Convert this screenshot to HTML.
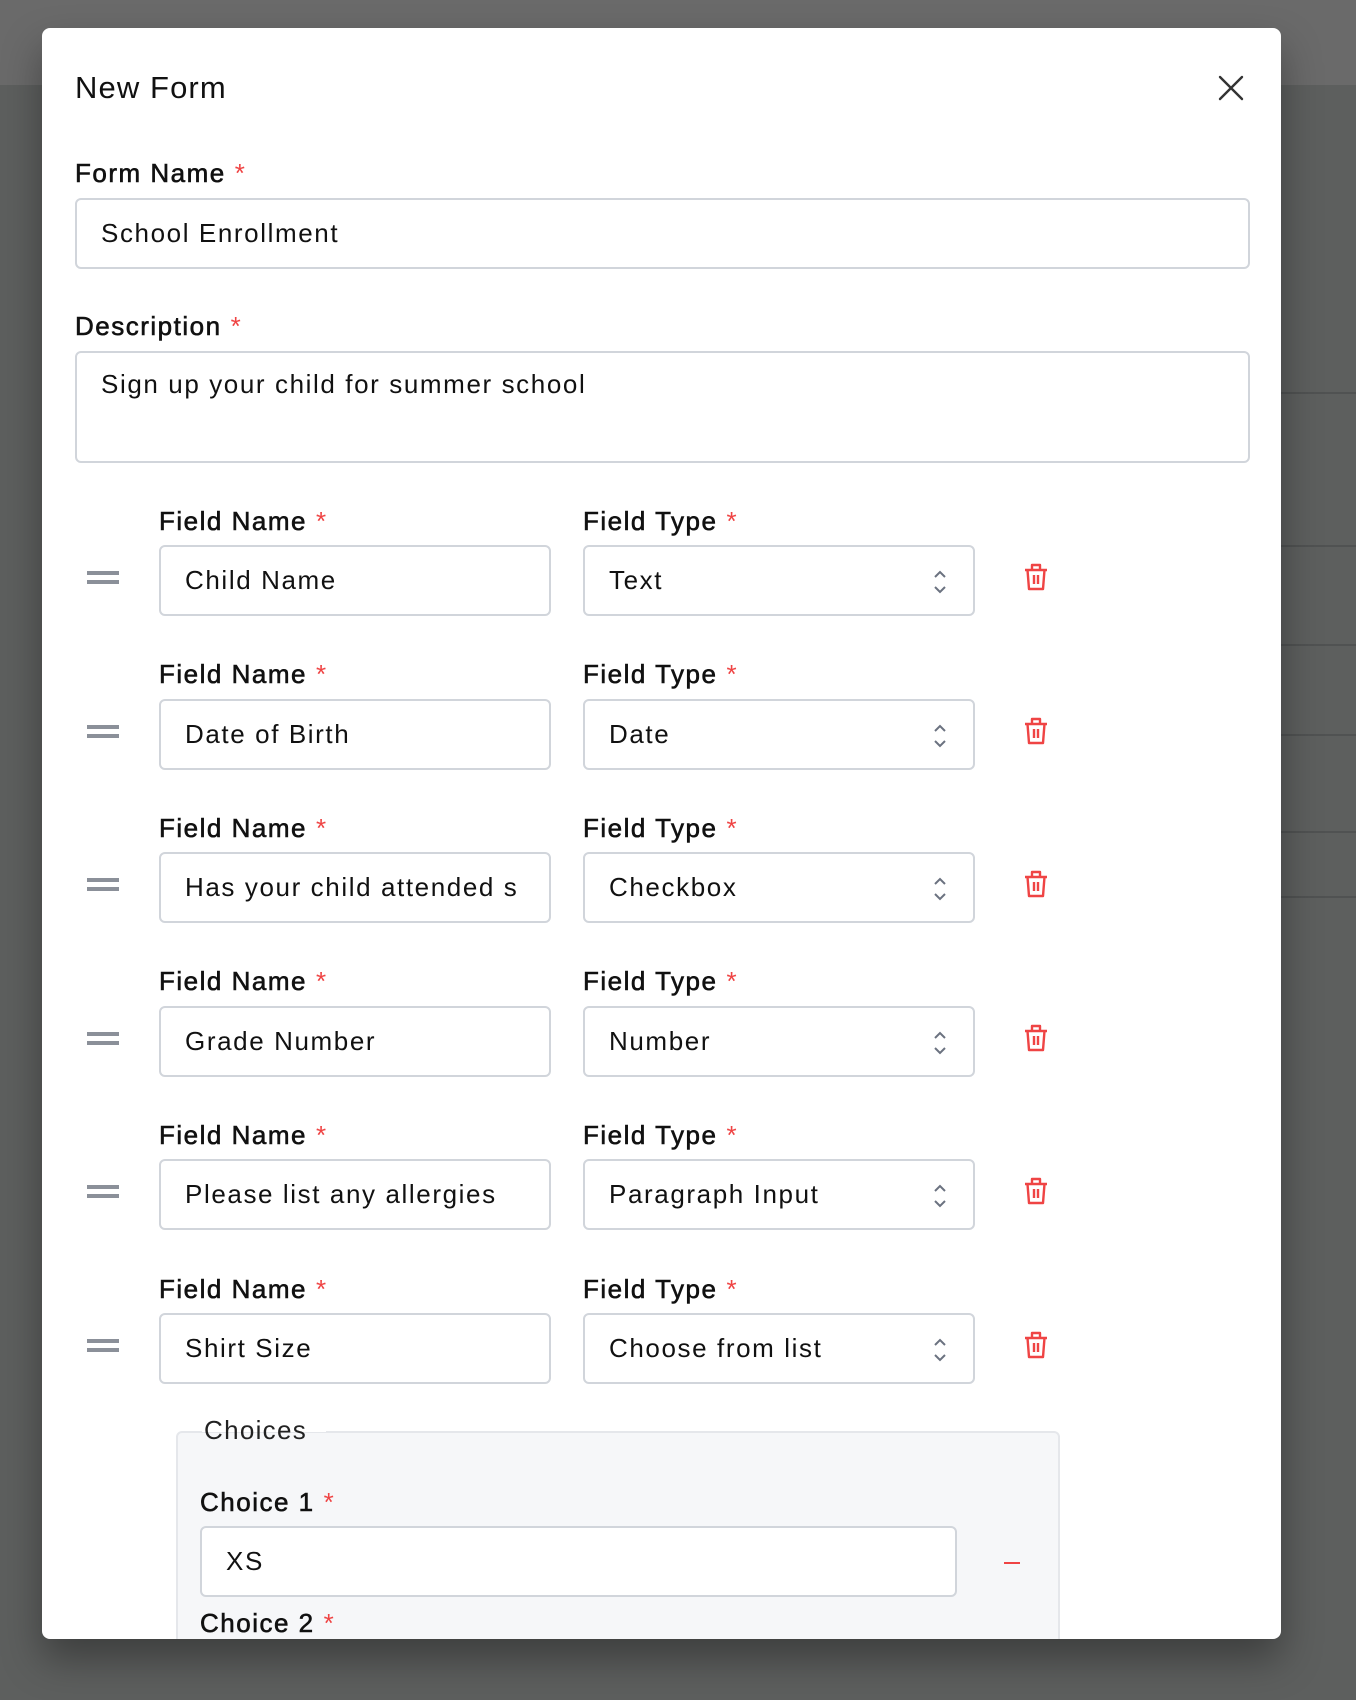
<!DOCTYPE html>
<html><head><meta charset="utf-8"><style>
*{box-sizing:border-box;margin:0;padding:0}
body{width:1356px;height:1700px;background:#5d5f5e;position:relative;overflow:hidden;font-family:"Liberation Sans",sans-serif;color:#111}
.topband{position:absolute;left:0;top:0;width:1356px;height:85px;background:#6a6a6a}
.bgline{position:absolute;right:0;width:80px;height:2px;background:#505252}
.modal{position:absolute;left:42px;top:28px;width:1239px;height:1611px;background:#fff;border-radius:8px;overflow:hidden;box-shadow:0 20px 40px rgba(0,0,0,.35)}
.abs{position:absolute}
.title{left:33px;top:42px;font-size:31px;letter-spacing:1.1px;color:#111}
.lbl{position:absolute;font-size:26px;font-weight:400;-webkit-text-stroke:0.6px #111;letter-spacing:1.5px;color:#111;line-height:30px}
.lbl b{color:#ef4444;font-weight:400;-webkit-text-stroke:0;margin-left:9px}
.inp{position:absolute;border:2px solid #d1d5db;border-radius:6px;background:#fff;font-size:26px;letter-spacing:1.6px;padding-left:24px;line-height:66px;white-space:nowrap;overflow:hidden}
.sel{padding-left:24px}
.chev{position:absolute;right:26px;top:22px}
.drag{position:absolute;left:45px;width:32px;height:14px}
.drag:before,.drag:after{content:"";position:absolute;left:0;width:32px;height:4px;background:#8b9099}
.drag:before{top:0}.drag:after{top:9px}
.trash{position:absolute;left:980px}
</style></head><body>
<div class="topband"></div>
<div class="bgline" style="top:392px"></div>
<div class="bgline" style="top:545px"></div>
<div class="bgline" style="top:644px"></div>
<div class="bgline" style="top:734px"></div>
<div class="bgline" style="top:831px"></div>
<div class="bgline" style="top:896px"></div>
<div class="modal">
<div class="abs title">New Form</div>
<svg class="abs" style="left:1175px;top:46px" width="28" height="28" viewBox="0 0 28 28"><path d="M3 3L25 25M25 3L3 25" stroke="#333" stroke-width="2.4" stroke-linecap="round"/></svg>

<div class="lbl" style="left:33px;top:130px">Form Name<b>*</b></div>
<div class="inp" style="left:33px;top:170px;width:1175px;height:71px">School Enrollment</div>

<div class="lbl" style="left:33px;top:283px">Description<b>*</b></div>
<div class="inp" style="left:33px;top:323px;width:1175px;height:112px;line-height:62px">Sign up your child for summer school</div>

<div class="lbl" style="left:117px;top:478px">Field Name<b>*</b></div>
<div class="lbl" style="left:541px;top:478px">Field Type<b>*</b></div>
<div class="drag" style="top:543px"></div>
<div class="inp" style="left:117px;top:517px;width:392px;height:71px">Child Name</div>
<div class="inp sel" style="left:541px;top:517px;width:392px;height:71px">Text<svg class="chev" width="14" height="26" viewBox="0 0 14 26"><path d="M2 8L7 3L12 8M2 18L7 23L12 18" fill="none" stroke="#6b7280" stroke-width="2"/></svg></div>
<svg class="trash" style="top:534px" width="28" height="30" viewBox="0 0 28 30"><path d="M3 8H25M10 8V3H18V8M5.5 8L7 27H21L22.5 8M12 13V22M16 13V22" fill="none" stroke="#ef4444" stroke-width="2.4" stroke-linejoin="round"/></svg>

<div class="lbl" style="left:117px;top:631px">Field Name<b>*</b></div>
<div class="lbl" style="left:541px;top:631px">Field Type<b>*</b></div>
<div class="drag" style="top:697px"></div>
<div class="inp" style="left:117px;top:671px;width:392px;height:71px">Date of Birth</div>
<div class="inp sel" style="left:541px;top:671px;width:392px;height:71px">Date<svg class="chev" width="14" height="26" viewBox="0 0 14 26"><path d="M2 8L7 3L12 8M2 18L7 23L12 18" fill="none" stroke="#6b7280" stroke-width="2"/></svg></div>
<svg class="trash" style="top:688px" width="28" height="30" viewBox="0 0 28 30"><path d="M3 8H25M10 8V3H18V8M5.5 8L7 27H21L22.5 8M12 13V22M16 13V22" fill="none" stroke="#ef4444" stroke-width="2.4" stroke-linejoin="round"/></svg>

<div class="lbl" style="left:117px;top:785px">Field Name<b>*</b></div>
<div class="lbl" style="left:541px;top:785px">Field Type<b>*</b></div>
<div class="drag" style="top:850px"></div>
<div class="inp" style="left:117px;top:824px;width:392px;height:71px">Has your child attended s</div>
<div class="inp sel" style="left:541px;top:824px;width:392px;height:71px">Checkbox<svg class="chev" width="14" height="26" viewBox="0 0 14 26"><path d="M2 8L7 3L12 8M2 18L7 23L12 18" fill="none" stroke="#6b7280" stroke-width="2"/></svg></div>
<svg class="trash" style="top:841px" width="28" height="30" viewBox="0 0 28 30"><path d="M3 8H25M10 8V3H18V8M5.5 8L7 27H21L22.5 8M12 13V22M16 13V22" fill="none" stroke="#ef4444" stroke-width="2.4" stroke-linejoin="round"/></svg>

<div class="lbl" style="left:117px;top:938px">Field Name<b>*</b></div>
<div class="lbl" style="left:541px;top:938px">Field Type<b>*</b></div>
<div class="drag" style="top:1004px"></div>
<div class="inp" style="left:117px;top:978px;width:392px;height:71px">Grade Number</div>
<div class="inp sel" style="left:541px;top:978px;width:392px;height:71px">Number<svg class="chev" width="14" height="26" viewBox="0 0 14 26"><path d="M2 8L7 3L12 8M2 18L7 23L12 18" fill="none" stroke="#6b7280" stroke-width="2"/></svg></div>
<svg class="trash" style="top:995px" width="28" height="30" viewBox="0 0 28 30"><path d="M3 8H25M10 8V3H18V8M5.5 8L7 27H21L22.5 8M12 13V22M16 13V22" fill="none" stroke="#ef4444" stroke-width="2.4" stroke-linejoin="round"/></svg>

<div class="lbl" style="left:117px;top:1092px">Field Name<b>*</b></div>
<div class="lbl" style="left:541px;top:1092px">Field Type<b>*</b></div>
<div class="drag" style="top:1157px"></div>
<div class="inp" style="left:117px;top:1131px;width:392px;height:71px">Please list any allergies</div>
<div class="inp sel" style="left:541px;top:1131px;width:392px;height:71px">Paragraph Input<svg class="chev" width="14" height="26" viewBox="0 0 14 26"><path d="M2 8L7 3L12 8M2 18L7 23L12 18" fill="none" stroke="#6b7280" stroke-width="2"/></svg></div>
<svg class="trash" style="top:1148px" width="28" height="30" viewBox="0 0 28 30"><path d="M3 8H25M10 8V3H18V8M5.5 8L7 27H21L22.5 8M12 13V22M16 13V22" fill="none" stroke="#ef4444" stroke-width="2.4" stroke-linejoin="round"/></svg>

<div class="lbl" style="left:117px;top:1246px">Field Name<b>*</b></div>
<div class="lbl" style="left:541px;top:1246px">Field Type<b>*</b></div>
<div class="drag" style="top:1311px"></div>
<div class="inp" style="left:117px;top:1285px;width:392px;height:71px">Shirt Size</div>
<div class="inp sel" style="left:541px;top:1285px;width:392px;height:71px">Choose from list<svg class="chev" width="14" height="26" viewBox="0 0 14 26"><path d="M2 8L7 3L12 8M2 18L7 23L12 18" fill="none" stroke="#6b7280" stroke-width="2"/></svg></div>
<svg class="trash" style="top:1302px" width="28" height="30" viewBox="0 0 28 30"><path d="M3 8H25M10 8V3H18V8M5.5 8L7 27H21L22.5 8M12 13V22M16 13V22" fill="none" stroke="#ef4444" stroke-width="2.4" stroke-linejoin="round"/></svg>

<div class="abs" style="left:134px;top:1403px;width:884px;height:260px;background:#f6f7f9;border:2px solid #e5e7eb;border-radius:6px"></div>
<div class="abs" style="left:160px;top:1386px;width:124px;background:#fff;height:18px"></div>
<div class="abs" style="left:162px;top:1387px;font-size:26px;letter-spacing:1.3px;color:#222;line-height:30px">Choices</div>
<div class="lbl" style="left:158px;top:1459px">Choice 1<b>*</b></div>
<div class="inp" style="left:158px;top:1498px;width:757px;height:71px">XS</div>
<div class="abs" style="left:962px;top:1534px;width:16px;height:2px;background:#ef4444"></div>
<div class="lbl" style="left:158px;top:1580px">Choice 2<b>*</b></div>
</div>
</body></html>
